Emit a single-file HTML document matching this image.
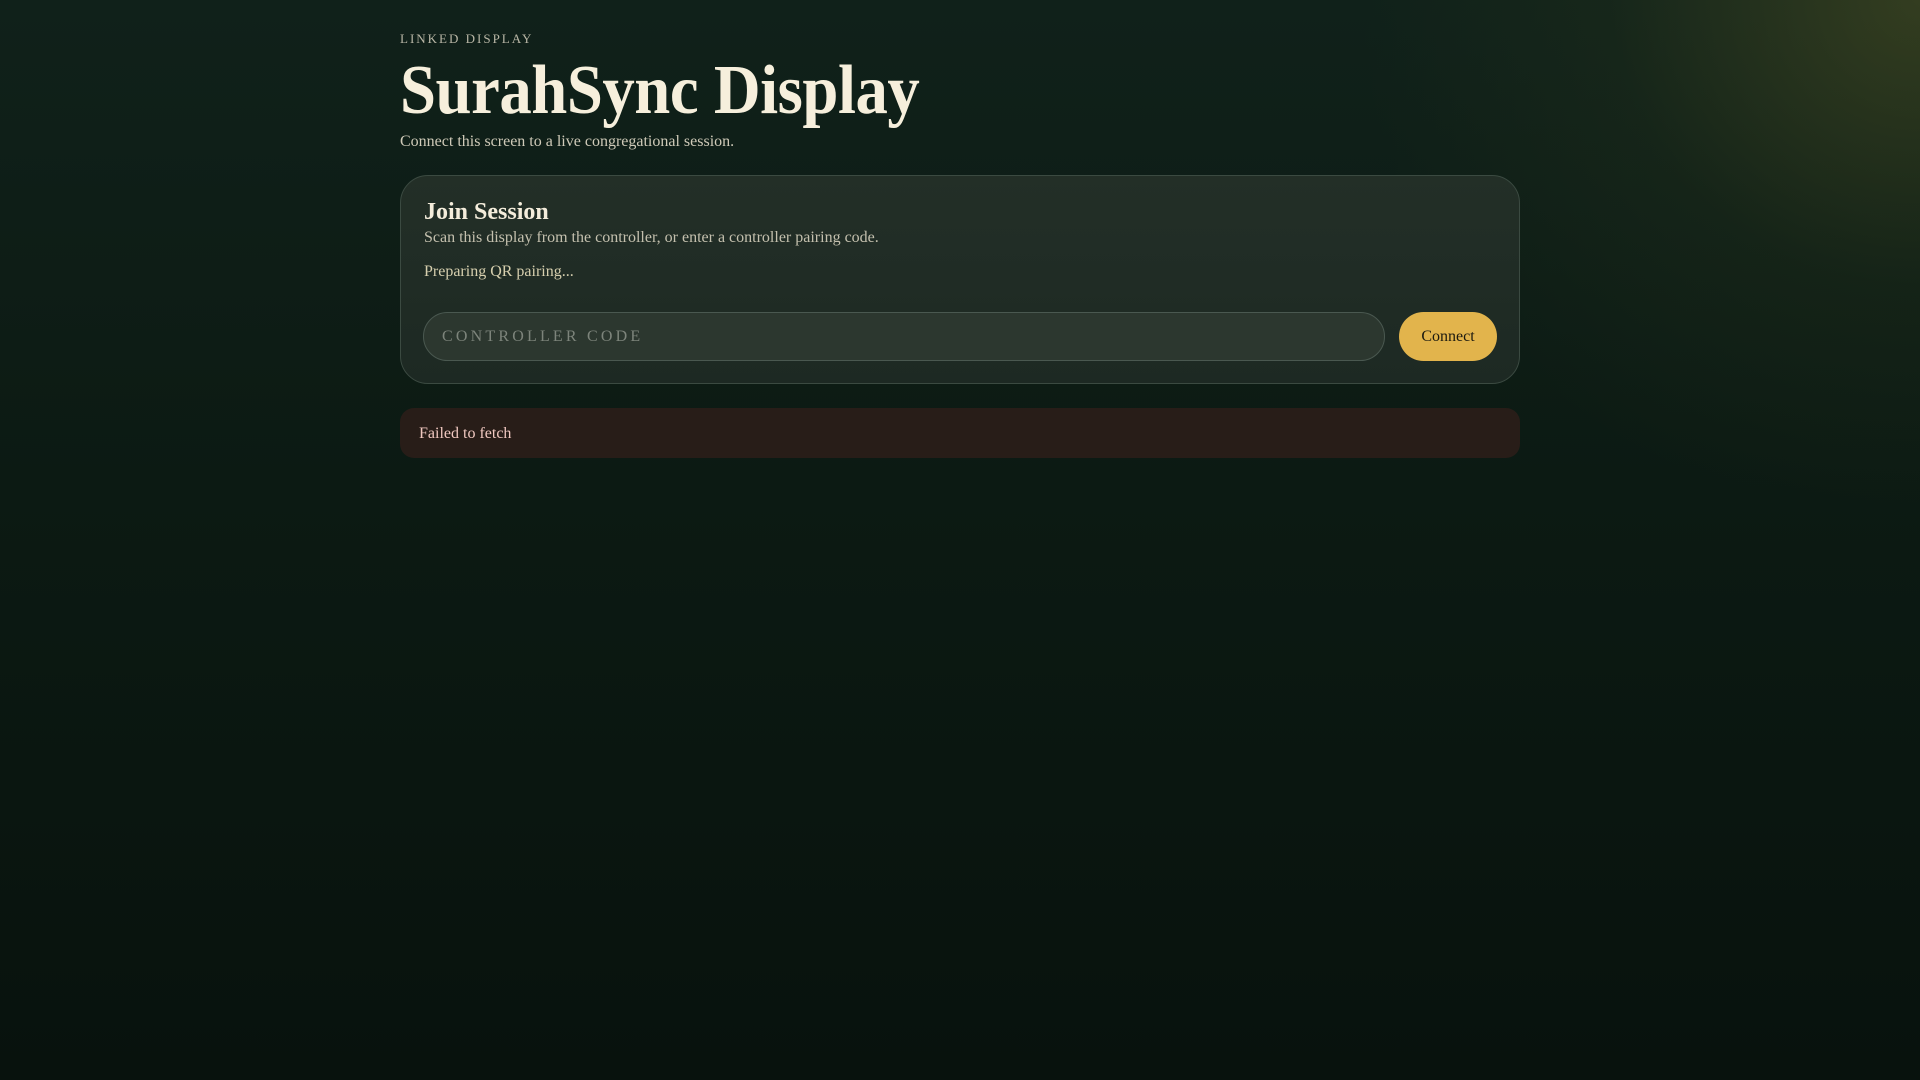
<!DOCTYPE html>
<html><head><meta charset="utf-8"><style>
*{box-sizing:border-box;margin:0;padding:0}
html,body{width:1920px;height:1080px;overflow:hidden}
body{font-family:"Liberation Serif",serif;color:#f3ecd9;
background:radial-gradient(ellipse 560px 520px at 1920px 0px,rgba(100,100,40,0.42),rgba(60,70,30,0.15) 55%,rgba(0,0,0,0) 100%),linear-gradient(180deg,#10211a 0%,#0c1a13 45%,#08120d 100%);position:relative}
.wrap{position:absolute;left:400px;top:0;width:1120px}
.eyebrow{position:absolute;top:31px;font-size:13px;letter-spacing:2.0px;color:#b9b6a6}
h1{position:absolute;top:51px;font-size:70px;font-weight:bold;letter-spacing:-0.5px;color:#f6efdc;white-space:nowrap;line-height:80px;transform:scaleX(0.925);transform-origin:0 0}
.sub{position:absolute;top:133px;font-size:16px;color:#cfcab8}
.card{position:absolute;top:175px;left:0;width:1120px;height:209px;border:1px solid #3b4a41;border-radius:28px;background:linear-gradient(180deg,#232f27,#1d2923)}
.card h2{position:absolute;left:23px;top:23px;font-size:24px;font-weight:bold;color:#f4eddb}
.card .d{position:absolute;left:23px;top:53px;font-size:16px;color:#c4c0ae}
.card .p{position:absolute;left:23px;top:87px;font-size:16px;color:#d6cfae}
.inp{position:absolute;left:22px;top:136px;width:962px;height:49px;border:1px solid #4a5850;border-radius:25px;background:#2c372f;color:#7d847b;font-size:16px;letter-spacing:3.2px;padding-left:18px;line-height:47px}
.btn{position:absolute;left:998px;top:136px;width:98px;height:49px;border-radius:25px;background:#e2b44c;color:#1c1a10;font-size:16px;text-align:center;line-height:49px}
.err{position:absolute;top:408px;left:0;width:1120px;height:50px;border-radius:14px;background:#281d18;color:#f0c8c0;font-size:16px;padding-left:19px;line-height:52px}
</style></head><body>
<div class="wrap">
<div class="eyebrow">LINKED DISPLAY</div>
<h1>SurahSync Display</h1>
<div class="sub">Connect this screen to a live congregational session.</div>
<div class="card">
<h2>Join Session</h2>
<div class="d">Scan this display from the controller, or enter a controller pairing code.</div>
<div class="p">Preparing QR pairing...</div>
<div class="inp">CONTROLLER CODE</div>
<div class="btn">Connect</div>
</div>
<div class="err">Failed to fetch</div>
</div>
</body></html>
